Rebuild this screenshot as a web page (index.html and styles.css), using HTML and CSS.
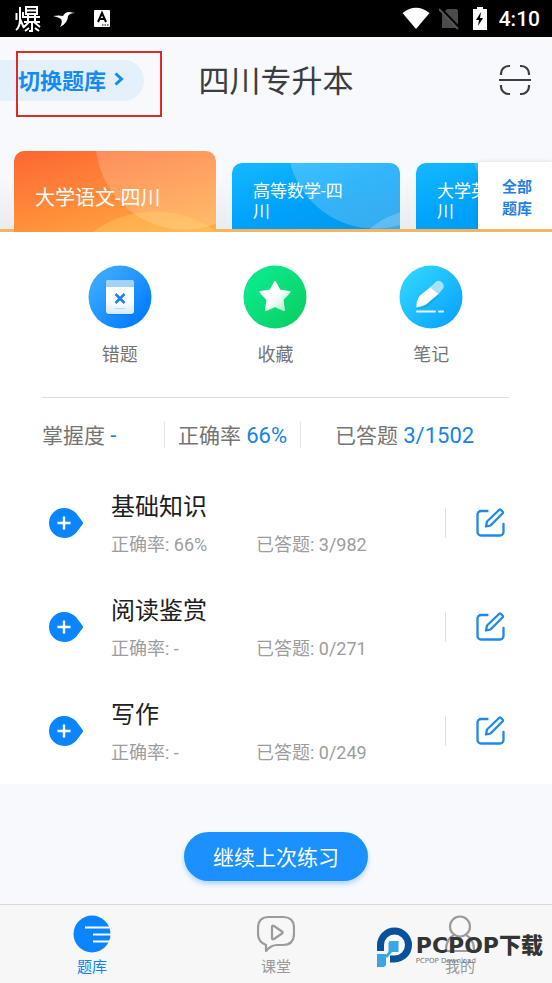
FILE: index.html
```html
<!DOCTYPE html>
<html lang="zh-CN">
<head>
<meta charset="utf-8">
<meta name="viewport" content="width=device-width, initial-scale=1">
<title>四川专升本</title>
<link rel="stylesheet" href="styles.css">
</head>
<body>
<svg class="sprite" aria-hidden="true">
  <symbol id="expand" viewBox="0 0 36 32">
    <path d="M16 1a15 15 0 1 0 0 30c5 0 9-2 12-5l6-8q2-2 0-4l-6-8C25 3 21 1 16 1Z" fill="#0a84ff"/>
    <path d="M9.500 16h13M16 9.500v13" stroke="#fff" stroke-width="2.400"/>
  </symbol>
  <symbol id="edit" viewBox="0 0 30 30" fill="none" stroke="#1e88ee" stroke-width="2.300" stroke-linejoin="round" stroke-linecap="round">
    <path d="M11.500 3H5a3.500 3.500 0 0 0-3.500 3.500V24A3.500 3.500 0 0 0 5 27.500h19a3.500 3.500 0 0 0 3.500-3.500v-8"/>
    <path d="m11 13.500 12-11.500q1-1 2 0l1.500 1.500q1 1 0 2L14.500 17.500 10 18.500Z"/>
  </symbol>
</svg>

<div class="status">
  <svg width="26" height="28" viewBox="0 0 26 28" fill="none" stroke="#fff" stroke-width="2">
    <path d="M1.500 8v7M5 2v12q0 8-4 11M8 7v6M5 14l4 9M11 2h11v7H11ZM11 5.500h11M9 12h16M13 9.500v8M20 9.500v8M9 17h16M14 17l-5 5M19 17l6 5M17 18v8h-3M10 26l4-3M24 26l-4-3"/>
  </svg>
  <svg class="bird" width="22" height="16" viewBox="0 0 22 16" fill="#fff">
    <path d="M0 5q6-1 10 0 2-4 6-4l6 1q-5 0-7 3 0 7-8 11 3-5 1-8Q5 6 0 5Z"/>
  </svg>
  <svg class="reader" width="18" height="19" viewBox="0 0 18 19">
    <rect x="1" y="1" width="16" height="17" rx="1" fill="#fff"/>
    <path d="m5 13 4-9 4 9M6.500 10h5" fill="none" stroke="#000" stroke-width="2"/>
    <path d="M9 16h7" stroke="#000" stroke-dasharray="1.500 1"/>
  </svg>
  <span class="spacer"></span>
  <svg width="28" height="23" viewBox="0 0 28 23"><path d="M.5 6Q14-4.500 27.500 6L14 22Z" fill="#fff"/></svg>
  <svg class="sim" width="22" height="22" viewBox="0 0 22 22">
    <path d="M8 1h9q2 0 2 2v17H3V6Z" fill="#4b4b4b"/>
    <path d="m1 0 20 21" stroke="#000" stroke-width="3"/><path d="m0 1 19 20" stroke="#555" stroke-width="2"/>
  </svg>
  <svg class="battery" width="14" height="23" viewBox="0 0 14 23">
    <path d="M4 0h6v2h4v21H0V2h4Z" fill="#fff"/><path d="m8 5-5 8h3l-1 6 5-8H7l1-6Z" fill="#000"/>
  </svg>
  <time>4:10</time>
</div>

<header class="header">
  <button class="switch" type="button">切换题库
    <svg width="10" height="14" viewBox="0 0 10 14"><path d="m1.500 1.500 6 5.500-6 5.500" fill="none" stroke="#158af5" stroke-width="3"/></svg>
  </button>
  <h1>四川专升本</h1>
  <button class="scan" type="button" aria-label="扫一扫">
    <svg width="32" height="32" viewBox="0 0 32 32" fill="none" stroke="#3c3d40" stroke-width="2.200">
      <path d="M2 11V9.500A7.500 7.500 0 0 1 9.500 2H11M21 2h1.500A7.500 7.500 0 0 1 30 9.500V11M2 21v1.500A7.500 7.500 0 0 0 9.500 30H11M21 30h1.500a7.500 7.500 0 0 0 7.500-7.500V21M0 16h32"/>
    </svg>
  </button>
  <span class="marker"></span>
</header>

<nav class="banks">
  <div class="strip">
    <button class="bank active" type="button">大学语文-四川</button>
    <button class="bank" type="button">高等数学-四川</button>
    <button class="bank" type="button">大学英语-四川</button>
  </div>
  <a class="all" href="#all">全部<br>题库</a>
</nav>

<main>
  <div class="actions">
    <a href="#wrong">
      <svg width="64" height="64" viewBox="0 0 64 64">
        <defs>
          <linearGradient id="g1" x1="0" y1="0" x2="1" y2="1"><stop offset=".2" stop-color="#38a7ff"/><stop offset=".9" stop-color="#007aff"/></linearGradient>
          <linearGradient id="p1" x1="0" y1="0" x2="0" y2="1"><stop offset=".6" stop-color="#fff"/><stop offset="1" stop-color="#d6e9ff"/></linearGradient>
        </defs>
        <circle cx="32" cy="32" r="31.500" fill="url(#g1)"/>
        <rect x="18" y="16" width="28" height="34" rx="3" fill="#0869d6" opacity=".4"/>
        <rect x="18" y="15" width="28" height="34" rx="3" fill="url(#p1)"/>
        <path d="M18 22v-4a3 3 0 0 1 3-3h22a3 3 0 0 1 3 3v4Z" fill="#a2d3fc"/>
        <path d="m27.500 29 9 9m0-9-9 9" stroke="#1683f3" stroke-width="2.500"/>
        <path d="M27 43.500h10" stroke="#b5d7fa"/>
      </svg>
      <span>错题</span>
    </a>
    <a href="#favorites">
      <svg width="64" height="64" viewBox="0 0 64 64">
        <defs>
          <linearGradient id="g2" x1="0" y1="0" x2="1" y2="1"><stop offset=".2" stop-color="#0be88b"/><stop offset=".9" stop-color="#0bcf64"/></linearGradient>
          <linearGradient id="p2" x1="0" y1="0" x2="1" y2="1"><stop offset=".5" stop-color="#fff"/><stop offset="1" stop-color="#a7f0c9"/></linearGradient>
        </defs>
        <circle cx="32" cy="32" r="31.500" fill="url(#g2)"/>
        <path d="m32 18 4.500 8.500 10 1.500-7 7.500 1.500 10.500-9-4-9 4 1.500-10.500-7-7.500 10-1.500Z" fill="#08a956" opacity=".35"/>
        <path d="m32 17 4.500 8.500 10 1.500-7 7.500 1.500 10.500-9-4-9 4 1.500-10.500-7-7.500 10-1.500Z" fill="url(#p2)" stroke="url(#p2)" stroke-width="2" stroke-linejoin="round"/>
      </svg>
      <span>收藏</span>
    </a>
    <a href="#notes">
      <svg width="64" height="64" viewBox="0 0 64 64">
        <defs>
          <linearGradient id="g3" x1="0" y1="0" x2="1" y2="1"><stop offset=".1" stop-color="#2fd6ff"/><stop offset=".9" stop-color="#0aa3ff"/></linearGradient>
        </defs>
        <circle cx="32" cy="32" r="31.500" fill="url(#g3)"/>
        <path d="M17.500 44q-1-7 3-12L31 22.500l9 9L29.500 41q-5 3-12 3Z" fill="#0789d5" opacity=".3"/>
        <path d="M17.500 42.500q-.500-7 3-11.500L32 21.500l7.500 7.500L27 39.500q-4 2-9.500 3Z" fill="#fff"/>
        <path d="M31 22.500 36.500 17q3-2.500 6 0t2 6l-5 6Z" fill="#a5e4ff"/>
        <path d="M18 46.500h18M40 46.500h4" stroke="#e8f8ff" stroke-width="2" stroke-linecap="round"/>
      </svg>
      <span>笔记</span>
    </a>
  </div>

  <div class="stats">
    <p>掌握度 <b>-</b></p>
    <p>正确率 <b>66%</b></p>
    <p>已答题 <b>3/1502</b></p>
  </div>

  <ul class="chapters">
    <li>
      <button type="button" aria-label="展开"><svg width="36" height="32"><use href="#expand"/></svg></button>
      <div class="info"><h2>基础知识</h2><p><span>正确率: 66%</span><span>已答题: 3/982</span></p></div>
      <a class="edit" href="#p1" aria-label="练习"><svg width="30" height="30"><use href="#edit"/></svg></a>
    </li>
    <li>
      <button type="button" aria-label="展开"><svg width="36" height="32"><use href="#expand"/></svg></button>
      <div class="info"><h2>阅读鉴赏</h2><p><span>正确率: -</span><span>已答题: 0/271</span></p></div>
      <a class="edit" href="#p2" aria-label="练习"><svg width="30" height="30"><use href="#edit"/></svg></a>
    </li>
    <li>
      <button type="button" aria-label="展开"><svg width="36" height="32"><use href="#expand"/></svg></button>
      <div class="info"><h2>写作</h2><p><span>正确率: -</span><span>已答题: 0/249</span></p></div>
      <a class="edit" href="#p3" aria-label="练习"><svg width="30" height="30"><use href="#edit"/></svg></a>
    </li>
  </ul>
</main>

<div class="resume"><button type="button">继续上次练习</button></div>

<footer class="tabbar">
  <a class="current" href="#bank">
    <svg width="38" height="38" viewBox="0 0 38 38"><circle cx="19" cy="19" r="18.500" fill="#0a84ff"/><path d="M12 12.500h26M20 19.500h18M20 26.500h18" stroke="#fff" stroke-width="2.200"/></svg>
    <span>题库</span>
  </a>
  <a href="#class">
    <svg width="38" height="38" viewBox="0 0 38 38" fill="none" stroke="#9b9b9b" stroke-width="2.200" stroke-linejoin="round">
      <path d="M12 2h14q11 0 11 11v6q0 11-11 11h-6q-6 0-11 6v-6Q1 27 1 19v-6Q1 2 12 2Z"/>
      <path d="M15 12q0-2 2-1l8 5.500q1.500 1 0 2L17 24q-2 1-2-1Z"/>
    </svg>
    <span>课堂</span>
  </a>
  <a href="#me">
    <svg width="38" height="38" viewBox="0 0 38 38" fill="none" stroke="#9b9b9b" stroke-width="2.200">
      <circle cx="19" cy="11.500" r="10"/><path d="M13 20Q5 24 5 35q0 1 1 1h26q1 0 1-1 0-11-8-15"/>
    </svg>
    <span>我的</span>
  </a>
  <div class="brand">
    <svg width="36" height="41" viewBox="0 0 36 41">
      <path d="M3.500 24V18A14 14 0 1 1 17.500 32H13" fill="none" stroke="#07519c" stroke-width="7"/>
      <path d="M11.500 16q0-2 2-2h8v11h-10Z" fill="#3aa6e6"/>
      <path d="m8 29 5-6 2 2-5 6Z" fill="#3aa6e6"/><path d="M0 27h9v11l-2 2H0Z" fill="#3aa6e6"/>
    </svg>
    <div><strong>PCPOP下载</strong><small>PCPOP Download</small></div>
  </div>
</footer>
</body>
</html>
```
FILE: styles.css
```css
* { box-sizing: border-box; margin: 0; padding: 0; }

body {
  display: flex;
  flex-direction: column;
  min-height: 100vh;
  background: #f7f9fc;
  color: #757575;
  font-family: Roboto, "Noto Sans CJK SC", sans-serif;
}

button { border: 0; background: none; font: inherit; color: inherit; }
a { color: inherit; text-decoration: none; }
svg { display: block; flex: none; }
.sprite { position: absolute; width: 0; height: 0; }

.status {
  display: flex;
  align-items: center;
  height: 37px;
  padding: 0 12px 0 15px;
  background: #000;
  color: #fff;
}
.bird { margin-left: 12px; }
.reader { margin-left: 18px; }
.spacer { flex: 1; }
.sim { margin-left: 9px; }
.battery { margin: 0 12px; }
.status time { font-size: 21px; font-weight: 500; }

.header {
  position: relative;
  display: grid;
  grid-template-columns: 1fr auto 1fr;
  align-items: center;
  height: 86px;
}
.switch {
  display: flex;
  align-items: center;
  gap: 8px;
  justify-self: start;
  height: 41px;
  padding: 0 20px 2px 18px;
  border-radius: 0 21px 21px 0;
  background: #e4f1fb;
  color: #158af5;
  font-size: 22px;
  font-weight: 700;
}
.header h1 { padding-top: 3px; color: #3c3d40; font-size: 31px; font-weight: 400; line-height: 40px; }
.scan { justify-self: end; margin-right: 21px; }
.marker {
  position: absolute;
  left: 16px;
  top: 14px;
  width: 146px;
  height: 66px;
  border: 2px solid #da2c27;
}

.banks {
  display: flex;
  align-items: flex-end;
  height: 109px;
  background:
    linear-gradient(#f3b55e, #f3b55e) bottom / 100% 3px no-repeat,
    linear-gradient(#f7f9fc 50%, #e9ebee);
}
.strip {
  display: flex;
  flex: 1;
  align-items: flex-end;
  gap: 16px;
  min-width: 0;
  padding-left: 14px;
  overflow: hidden;
}
.bank {
  flex: none;
  width: 168px;
  height: 66px;
  margin-bottom: 3px;
  padding: 10px 42px 0 21px;
  border-radius: 10px 10px 0 0;
  background:
    radial-gradient(circle 80px at 190px 126px, #ffffff33 99%, transparent),
    radial-gradient(circle 88px at 143px -22px, #ffffff33 99%, transparent),
    linear-gradient(160deg, #14b9ff, #00a2fb 50%, #0596e9);
  color: #fff;
  font-size: 17px;
  line-height: 20px;
  text-align: left;
}
.bank.active {
  width: 202px;
  height: 81px;
  margin: 0;
  padding: 12px 21px 0;
  background:
    radial-gradient(circle 105px at 141px 165px, #ffd86b55 99%, transparent),
    radial-gradient(circle 90px at 171px -11px, #ffffff33 99%, transparent),
    linear-gradient(165deg, #fd6632, #ff8a39 50%, #ffad45);
  font-size: 20px;
}
.all {
  display: flex;
  align-items: center;
  justify-content: center;
  width: 74px;
  height: 67px;
  margin-bottom: 3px;
  padding: 5px 0 0 4px;
  border-radius: 4px 0 0 0;
  background: #fff;
  box-shadow: 0 0 5px #0000001f;
  clip-path: inset(-6px 0 0 -6px);
  color: #1f80e8;
  font-size: 15px;
  font-weight: 700;
  line-height: 22px;
}

main { padding: 0 43px 0 42px; background: #fff; }
.actions {
  display: grid;
  grid-template-columns: repeat(3, 1fr);
  height: 166px;
  padding-top: 33px;
  border-bottom: 1px solid #dedede;
}
.actions a {
  display: flex;
  flex-direction: column;
  align-items: center;
  gap: 12px;
  font-size: 18px;
  line-height: 28px;
}

.stats {
  display: grid;
  grid-template-columns: 122px 136px 1fr;
  align-items: center;
  height: 73px;
  font-size: 21px;
}
.stats p { height: 26px; line-height: 28px; white-space: nowrap; }
.stats p + p { padding-left: 13px; border-left: 1px solid #e5e5e5; }
.stats p:last-child { padding-left: 34px; }
.stats b { color: #1682ec; font-size: 22px; font-weight: 400; }

.chapters { padding-bottom: 1px; list-style: none; }
.chapters li { display: flex; align-items: center; height: 104px; padding: 0 3px 0 6px; }
.info { flex: 1; margin-left: 27px; padding-top: 6px; }
.info h2 { color: #202020; font-size: 24px; font-weight: 400; line-height: 38px; }
.info p { display: flex; color: #9d9d9d; font-size: 18px; line-height: 38px; }
.info p span:first-child { width: 145px; }
.edit { padding-left: 30px; border-left: 1px solid #dedede; }

.resume { flex: 1; padding-top: 48px; text-align: center; }
.resume button {
  height: 49px;
  padding: 0 29px 2px;
  border-radius: 25px;
  background: #1b90ff;
  box-shadow: 0 3px 5px #1b90ff55;
  color: #fff;
  font-size: 21px;
}

.tabbar {
  position: relative;
  display: grid;
  grid-template-columns: repeat(3, 1fr);
  height: 79px;
  padding-top: 10px;
  border-top: 1px solid #d5dadc;
  background: #f7f7f7;
  color: #999;
}
.tabbar a {
  display: flex;
  flex-direction: column;
  align-items: center;
  gap: 4px;
  font-size: 15px;
  line-height: 20px;
}
.tabbar .current { color: #0a84ff; }
.brand {
  position: absolute;
  right: 9px;
  bottom: 15px;
  display: flex;
  align-items: center;
  gap: 3px;
  color: #343434;
  white-space: nowrap;
}
.brand div { padding-top: 5px; }
.brand strong {
  display: block;
  font: 900 22px/22px "DejaVu Sans", "Noto Sans CJK SC", sans-serif;
}
.brand small {
  display: block;
  color: #777;
  font: 7px/8px "DejaVu Sans", sans-serif;
}
```
